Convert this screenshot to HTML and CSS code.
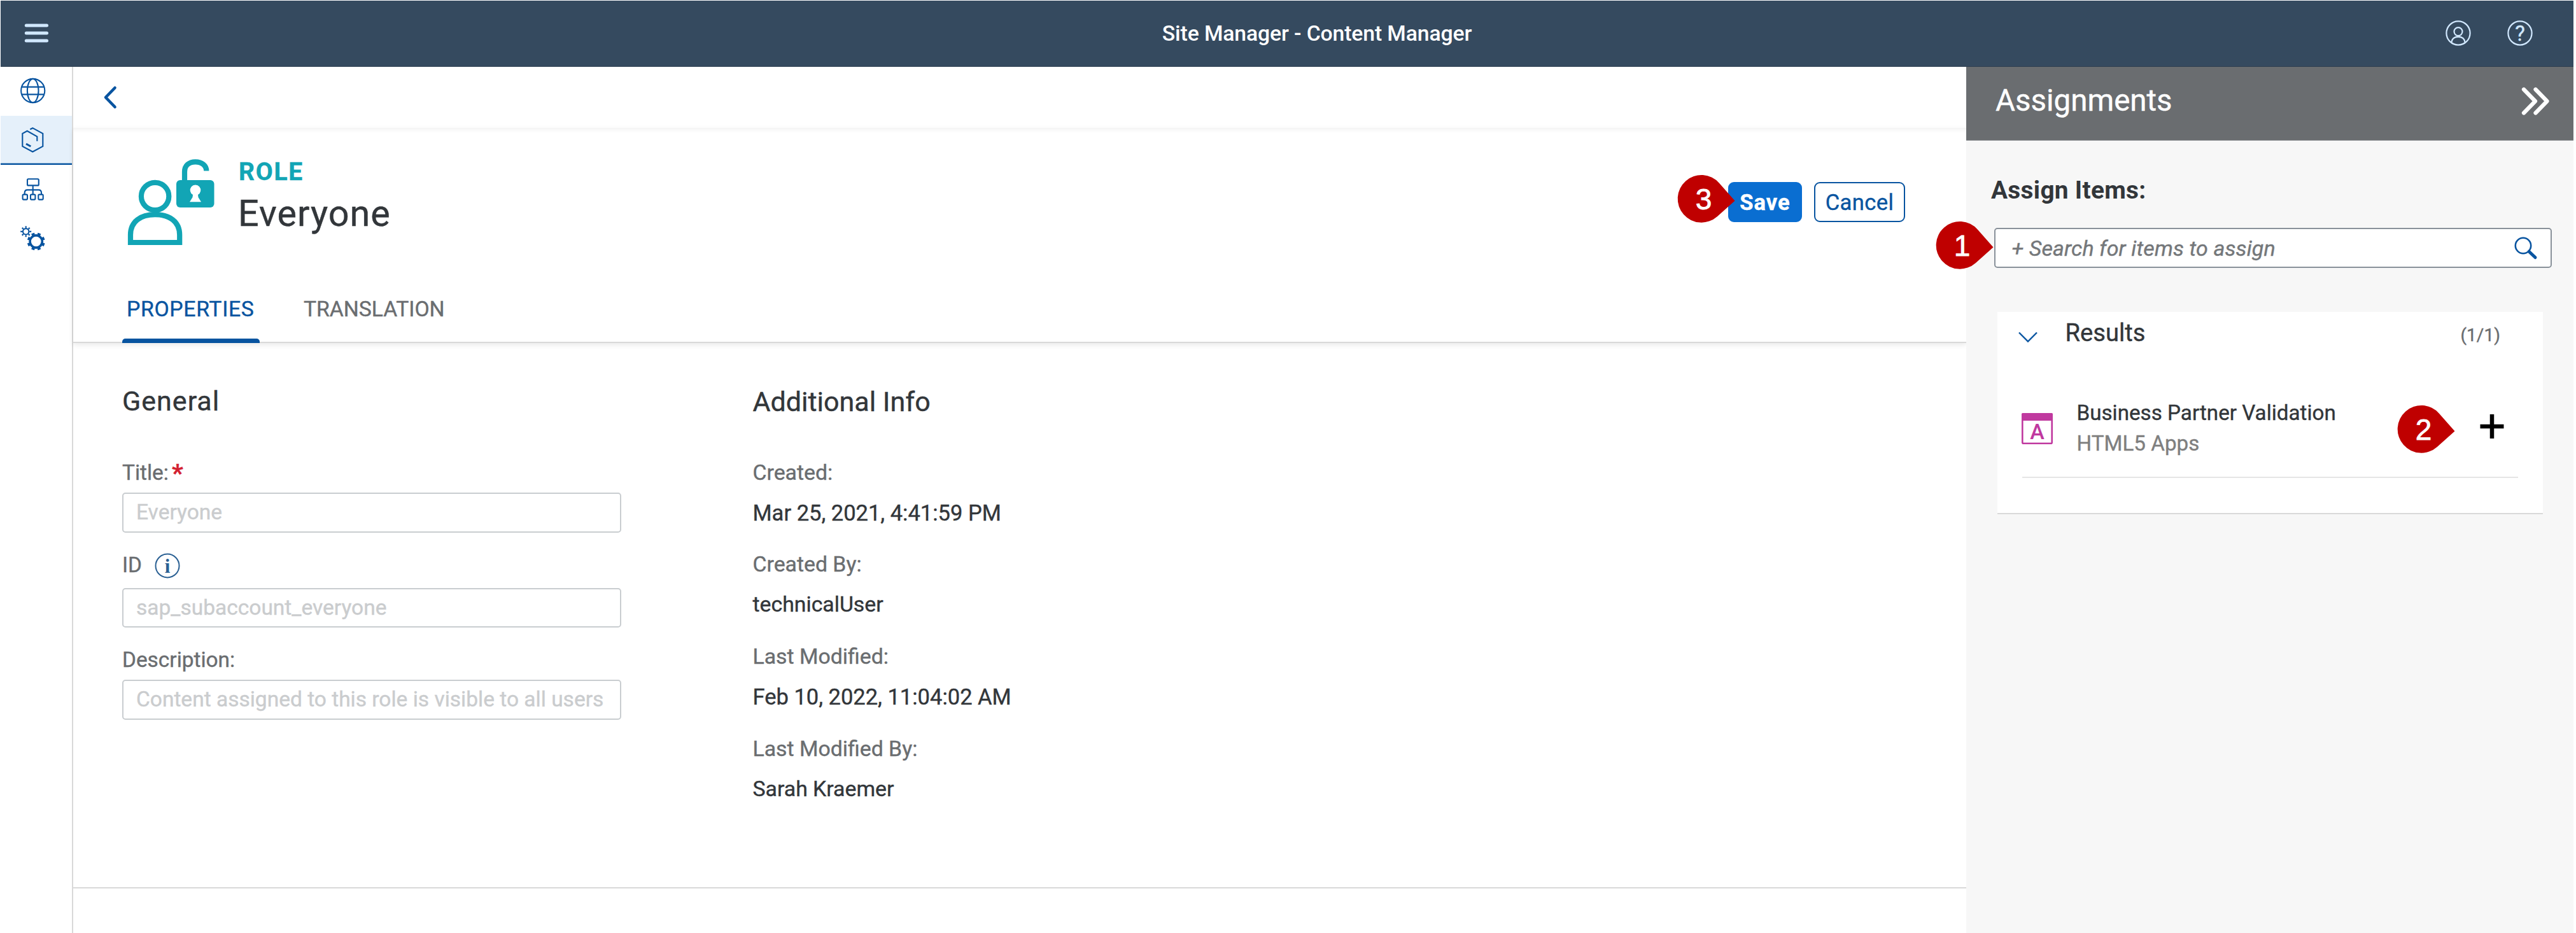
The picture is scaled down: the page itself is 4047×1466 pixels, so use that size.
FILE: index.html
```html
<!DOCTYPE html>
<html lang="en">
<head>
<meta charset="utf-8">
<title>Site Manager - Content Manager</title>
<link rel="stylesheet" href="styles.css">
</head>
<body>
<div class="app">
  <header class="shell">
    <div class="shell-left">
      <svg class="menu-icon" width="40" height="32" viewBox="0 0 40 32"><path d="M3.3 4H35.5M3.3 16H35.5M3.3 28H35.5"/></svg>
    </div>
    <h1 class="shell-title">Site Manager - Content Manager</h1>
    <div class="shell-right">
      <svg class="shell-icon" width="42" height="42" viewBox="-21 -21 42 42"><circle r="18.6"/><circle cy="-2.4" r="6.5"/><path d="M-10.8 14.8C-10 8.5-6.5 5.9 0 5.9S10 8.5 10.8 14.8"/></svg>
      <svg class="shell-icon" width="42" height="42" viewBox="-21 -21 42 42"><circle r="18.6"/><text y="12" text-anchor="middle">?</text></svg>
    </div>
  </header>

  <div class="body">
    <nav class="side">
      <a class="side-item"><svg width="44" height="44" viewBox="0 0 44 44"><circle cx="21.7" cy="20.5" r="18.6"/><ellipse cx="21.7" cy="20.5" rx="8.8" ry="18.6"/><path d="M4.3 14.6H39M4.3 26.4H39"/></svg></a>
      <a class="side-item selected"><svg width="44" height="44" viewBox="0 0 44 44"><path d="M17.3 4.2L21.3 2.2L37.3 10.8V30.8L21.3 39.5L5.3 30.8V10.8L12.7 6.8L28.3 15.5V22.8"/><path class="thick" d="M11 27L18.3 31"/></svg></a>
      <a class="side-item"><svg width="44" height="44" viewBox="0 0 44 44"><rect x="13" y="5.2" width="17.8" height="10.2" rx="1.5"/><path d="M21.7 15.4V29.5M8.7 29.5V27C8.7 23.8 10.2 22.4 13 22.4H30.7C33.5 22.4 35 23.8 35 27V29.5"/><rect x="5.6" y="29.6" width="7.4" height="8" rx="1.5"/><rect x="18" y="29.6" width="7.4" height="8" rx="1.5"/><rect x="30.3" y="29.6" width="7.4" height="8" rx="1.5"/></svg></a>
      <a class="side-item"><svg width="44" height="44" viewBox="0 0 44 44"><circle cx="10.7" cy="10.8" r="4.7"/><circle class="teeth-s" cx="10.7" cy="10.8" r="7" pathLength="16"/><circle class="ring" cx="26.7" cy="26.5" r="9.6"/><circle class="teeth" cx="26.7" cy="26.5" r="12.3" pathLength="16"/></svg></a>
    </nav>

    <main class="main">
      <div class="backbar"><svg width="22" height="36" viewBox="0 0 22 36"><path d="M18.5 3L4 18L18.5 33"/></svg></div>
      <section class="object">
        <div class="object-head">
          <svg class="role-icon" width="136" height="136" viewBox="0 0 136 136">
            <circle cx="42.6" cy="58.5" r="21.7"/>
            <path d="M4 131V119C4 98 20 87.2 42.6 87.2S81.2 98 81.2 119V131Z"/>
            <path d="M89 36V20C89 10 96 4.3 106 4.3S123.3 10 123.3 18.5"/>
            <rect class="solid" x="76" y="33" width="59.5" height="43" rx="6"/>
            <path class="hole" d="M102 56A8.3 8.3 0 1 1 110 56L110.5 60L115 67.3H97L101.5 60Z"/>
          </svg>
          <div class="object-text">
            <div class="object-type">ROLE</div>
            <h2 class="object-name">Everyone</h2>
          </div>
          <div class="actions">
            <button class="btn btn-save">Save</button>
            <button class="btn btn-cancel">Cancel</button>
          </div>
        </div>
        <div class="tabs">
          <a class="tab active">PROPERTIES</a>
          <a class="tab">TRANSLATION</a>
        </div>
      </section>

      <section class="details">
        <div class="general">
          <h3>General</h3>
          <div class="field">
            <div class="label">Title:<span class="req">*</span></div>
            <div class="input">Everyone</div>
          </div>
          <div class="field field-id">
            <div class="label">ID<svg class="info" width="40" height="40" viewBox="-20 -20 40 40"><circle r="18.5"/><text y="11" text-anchor="middle">i</text></svg></div>
            <div class="input">sap_subaccount_everyone</div>
          </div>
          <div class="field">
            <div class="label">Description:</div>
            <div class="input">Content assigned to this role is visible to all users</div>
          </div>
        </div>
        <div class="info-col">
          <h3>Additional Info</h3>
          <dl>
            <dt>Created:</dt><dd class="date">Mar 25, 2021, 4:41:59 PM</dd>
            <dt>Created By:</dt><dd>technicalUser</dd>
            <dt>Last Modified:</dt><dd class="date">Feb 10, 2022, 11:04:02 AM</dd>
            <dt>Last Modified By:</dt><dd>Sarah Kraemer</dd>
          </dl>
        </div>
      </section>
    </main>

    <aside class="panel">
      <div class="panel-head">
        <h2>Assignments</h2>
        <svg width="48" height="48" viewBox="0 0 48 48"><path d="M6 5.5L24 24L6 42.5M24.5 5.5L42.5 24L24.5 42.5"/></svg>
      </div>
      <div class="panel-body">
        <div class="panel-label">Assign Items:</div>
        <div class="search">
          <span>+ Search for items to assign</span>
          <svg width="38" height="38" viewBox="0 0 38 38"><circle cx="15" cy="15" r="12.2"/><path class="handle" d="M24.2 24.2L34 33.5"/></svg>
        </div>
        <div class="card">
          <div class="card-head">
            <svg width="34" height="20" viewBox="0 0 34 20"><path d="M3 2.5L17 16.5L31 2.5"/></svg>
            <h3>Results</h3>
            <span class="count">(1/1)</span>
          </div>
          <div class="item">
            <svg class="app-icon" width="49" height="49" viewBox="0 0 49 49"><rect x="1.3" y="1.3" width="46.4" height="46.4" rx="1.5"/><path d="M0 12V2Q0 0 2 0H47Q49 0 49 2V12Z"/><text x="24.5" y="41" text-anchor="middle">A</text></svg>
            <div class="item-text">
              <div class="item-title">Business Partner Validation</div>
              <div class="item-sub">HTML5 Apps</div>
            </div>
            <svg class="plus" width="38" height="40" viewBox="0 0 38 40"><path d="M19 1V39M0.5 20H37.5"/></svg>
          </div>
        </div>
      </div>
    </aside>
  </div>

  <svg class="pin pin-1" width="90" height="75" viewBox="0 0 90 75"><path d="M89.5 40.5L65 12.7A37.3 37.3 0 1 0 61.8 65.2Z"/><text x="40.5" y="54" text-anchor="middle">1</text></svg>
  <svg class="pin pin-2" width="90" height="75" viewBox="0 0 90 75"><path d="M89.5 40.5L65 12.7A37.3 37.3 0 1 0 61.8 65.2Z"/><text x="40.5" y="54" text-anchor="middle">2</text></svg>
  <svg class="pin pin-3" width="90" height="75" viewBox="0 0 90 75"><path d="M89.5 40.5L65 12.7A37.3 37.3 0 1 0 61.8 65.2Z"/><text x="40.5" y="54" text-anchor="middle">3</text></svg>
</div>
</body>
</html>
```
FILE: styles.css
```css
* { box-sizing: border-box; }
body { margin: 0; background: #fff; color: #32363a; font: 33.8px Roboto, "Liberation Sans", sans-serif; -webkit-text-stroke: 0.4px; }
h1, h2, h3, dl, dd { margin: 0; font-weight: 400; }
svg { display: block; flex: none; overflow: visible; fill: none; }

.app { position: relative; width: 4043px; height: 1466px; padding: 1px 0 0 1px; display: flex; flex-direction: column; overflow: hidden; }

/* Shell bar */
.shell { height: 104px; flex: none; display: flex; align-items: center; background: #354a5f; border-bottom: 1px solid #2c3d4f; }
.shell-left { width: 302px; padding-left: 36.5px; }
.menu-icon { stroke: #d1e8ff; stroke-width: 5; stroke-linecap: round; margin-top: -2px; }
.shell-title { flex: 1; text-align: center; font-size: 33.7px; font-weight: 500; letter-spacing: -0.1px; line-height: 40px; color: #fff; -webkit-text-stroke: 0; }
.shell-right { width: 208px; display: flex; gap: 55px; padding-left: 5.7px; margin-top: -2px; }
.shell-icon { stroke: #d1e8ff; stroke-width: 2.2; }
.shell-icon text { font: 33px Roboto, sans-serif; fill: #d1e8ff; stroke: #d1e8ff; stroke-width: 0.4; }

.body { flex: 1; display: flex; min-height: 0; }

/* Side navigation */
.side { width: 114px; border-right: 2.5px solid #d9d9d9; }
.side-item { height: 77px; display: flex; align-items: center; justify-content: center; padding-right: 10px; }
.side-item svg { stroke: #0854a0; stroke-width: 2.1; }
.side-item.selected { background: #e5f0fa; box-shadow: inset 0 -2.5px #0854a0; }
.side-item .thick { stroke-width: 3; }
.side-item .ring { stroke-width: 3.6; }
.side-item .teeth { stroke-width: 3.4; stroke-dasharray: 1 1; stroke-dashoffset: -0.5; }
.side-item .teeth-s { stroke-width: 3; stroke-dasharray: 0.8 1.2; stroke-dashoffset: 0.4; }

/* Object page */
.main { flex: 1; min-width: 0; display: flex; flex-direction: column; }
.backbar { height: 96px; padding: 30px 0 0 46.5px; }
.backbar svg { stroke: #0854a0; stroke-width: 4.6; stroke-linecap: round; stroke-linejoin: round; }
.object { height: 338px; padding-top: 49px; border-bottom: 2px solid #d9d9d9; box-shadow: inset 0 7px 6px -4px #f2f2f2, 0 3px 8px rgba(0,0,0,.09); }
.object-head { display: flex; padding: 0 96px 0 86px; height: 136px; }
.role-icon { stroke: #12a5b5; stroke-width: 8.2; }
.role-icon .solid { fill: #12a5b5; stroke: none; }
.role-icon .hole { fill: #fff; stroke: none; }
.object-text { flex: 1; padding-left: 38px; }
.object-type { font-size: 39px; font-weight: 700; line-height: 41px; letter-spacing: 1.8px; color: #12a5b5; }
.object-name { margin: 13px 0 0 -1px; font-size: 57.5px; line-height: 64px; letter-spacing: 1px; }
.actions { display: flex; gap: 19px; padding-top: 36px; align-items: flex-start; }
.btn { height: 63px; border-radius: 9px; padding: 0; font: 34.6px/58px Roboto, sans-serif; -webkit-text-stroke: 0.4px; }
.btn-save { width: 116px; background: #0a6ed1; border: 2px solid #0a6ed1; color: #fff; font-weight: 700; font-size: 34.5px; letter-spacing: 1px; }
.btn-cancel { width: 143px; background: #fff; border: 2px solid #0854a0; color: #0854a0; letter-spacing: .4px; }
.tabs { display: flex; align-items: flex-end; gap: 62px; padding-left: 77px; height: 151px; }
.tab { position: relative; height: 103px; padding: 0 7px; line-height: 104px; color: #6a6d70; font-size: 33.7px; }
.tab.active { width: 216px; color: #0854a0; font-size: 33.8px; letter-spacing: .65px; }
.tab.active::after { content: ""; position: absolute; left: 0; right: 0; bottom: -2px; height: 7.5px; background: #0854a0; border-radius: 5px 5px 0 0; }

.details { height: 857px; display: flex; padding: 67px 0 0 77px; border-bottom: 2.5px solid #d9d9d9; }
.details h3 { font-size: 43px; line-height: 50px; }
.general { width: 784px; margin-right: 206.5px; }
.general h3 { letter-spacing: 1px; margin: -1px 0 68px; }
.label { display: flex; height: 40px; line-height: 40px; font-size: 33.4px; color: #6a6d70; }
.req { color: #d32030; font-weight: 700; font-size: 39px; margin-left: 5px; line-height: 43px; }
.info { margin: 1px 0 0 19.5px; stroke: #2a6093; stroke-width: 2; }
.info text { font: 700 31px "Liberation Serif", serif; fill: #2a6093; stroke: none; }
.input { height: 62.5px; margin-top: 11px; padding: 0 20px; border: 2px solid #c9cdd0; border-radius: 5px; line-height: 58px; font-size: 33.5px; color: #caccce; white-space: nowrap; }
.field + .field { margin-top: 31px; }
.field-id .input { margin-top: 16px; }
.info-col h3 { margin-bottom: 66.5px; }
dt, dd { line-height: 40px; font-size: 33.8px; }
dt { color: #6a6d70; }
dd { margin: 23px 0 41.8px; }
dd.date { font-size: 34.5px; }

/* Assignments panel */
.panel { width: 954px; background: #f7f7f7; }
.panel-head { height: 116px; display: flex; justify-content: space-between; padding: 0 36px 0 46px; background: #6a6d70; border-bottom: 1.5px solid #888b8e; color: #fff; }
.panel-head h2 { font-size: 47.5px; line-height: 107px; }
.panel-head svg { stroke: #fff; stroke-width: 6.2; stroke-linecap: round; stroke-linejoin: round; margin-top: 29.5px; }
.panel-body { padding: 56px 34px 0 44px; }
.panel-label { margin-left: -5px; font-size: 38.8px; font-weight: 700; line-height: 44px; letter-spacing: .3px; -webkit-text-stroke: 0; }
.search { margin-top: 37px; height: 63px; display: flex; align-items: center; justify-content: space-between; padding: 0 20px 0 25.5px; background: #fff; border: 2.5px solid #89919a; border-radius: 5px; font-size: 34px; font-style: italic; letter-spacing: .1px; color: #74777a; }
.search svg { stroke: #0854a0; stroke-width: 2.6; }
.search .handle { stroke-width: 5; stroke-linecap: round; }
.card { margin: 69px 14px 0 4.5px; height: 318px; padding: 11px 39px 0; background: #fff; border-bottom: 2.5px solid #d9d9d9; }
.card-head { display: flex; align-items: baseline; height: 44px; line-height: 44px; padding-right: 28px; }
.card-head svg { stroke: #0854a0; stroke-width: 2.4; margin-left: -8px; transform: translateY(4px); }
.card-head h3 { flex: 1; margin-left: 42px; font-size: 38.2px; }
.count { font-size: 28.1px; color: #6a6d70; }
.item { margin-top: 80px; display: flex; align-items: center; padding-bottom: 28px; border-bottom: 2.5px solid #e5e5e5; }
.app-icon { stroke: #c0399f; stroke-width: 2.6; margin-left: -1px; }
.app-icon path { fill: #c0399f; stroke: none; }
.app-icon text { font: 500 34px Roboto, sans-serif; fill: #c0399f; stroke: none; }
.item-text { flex: 1; padding-left: 38px; line-height: 48px; font-size: 33.2px; }
.item-sub { color: #7f7f7f; }
.plus { stroke: #000; stroke-width: 6.5; margin: -7px 22px 0 0; }

/* Step markers */
.pin { position: absolute; }
.pin path { fill: #bf0000; }
.pin text { font: 46px "Liberation Sans", Arial, sans-serif; fill: #fff; stroke: #fff; stroke-width: .8; }
.pin-1 { left: 3042px; top: 348px; }
.pin-2 { left: 3767px; top: 637px; }
.pin-3 { left: 2636px; top: 275px; }
```
